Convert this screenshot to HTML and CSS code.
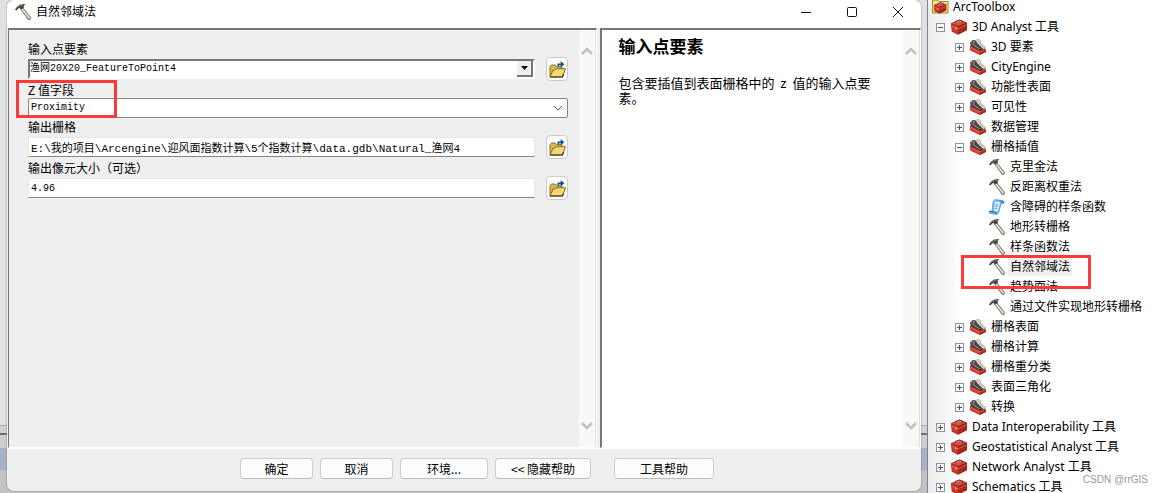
FILE: index.html
```html
<!DOCTYPE html>
<html lang="zh-CN">
<head>
<meta charset="utf-8">
<title>自然邻域法</title>
<link rel="stylesheet" href="styles.css">
</head>
<body>
<svg class="defs" aria-hidden="true">
  <symbol id="hammer" viewBox="0 0 16 16">
    <path d="M5.5 5l2.200-1.500 7.800 9.700-.3 2-1.700.8z" fill="#a99f8c" stroke="#6d675c" stroke-width=".7"/>
    <path d="M7 5l7.400 9.200" stroke="#eee6d3" stroke-width="1.300"/>
    <path d="M0 5.500L1.800 3 4.500.8 9 0l1.400.7-2 1.100.8 1.500-2.700 2.200L4.800 4.300 3 4.500 1.500 6.500z" fill="#424545"/>
    <path d="M2.600 3.200L5 1.600l3-.6" stroke="#8c9090" stroke-width=".7" fill="none"/>
  </symbol>
  <symbol id="box" viewBox="0 0 16 16">
    <path d="M0 4.200L8.500.4 16 3.400v7.800L7 15.800.8 12.500z" fill="#8a1c15"/>
    <path d="M.3 4.200L8.500.8l7.200 2.700L7 7z" fill="#cf5145"/>
    <path d="M.4 4.700L7 7.500v7.800L1.200 12.200z" fill="#cf3628"/>
    <path d="M7 7.500l8.600-3.700v7L7 15.300z" fill="#a9261d"/>
    <path d="M.6 6.800L7 9.800l8.500-3.700" stroke="#e07464" stroke-width=".7" fill="none"/>
    <path d="M4.300 3.900L5 2.500l3.500-1.300 2.800 1.300v1.500" stroke="#4a2420" stroke-width=".9" fill="none"/>
    <path d="M5.200 3.400l3.200-1.300 2 .8" stroke="#f2c5bb" stroke-width=".6" fill="none"/>
    <path d="M4.300 8.300l1 .4v2l-1-.5z" fill="#f5ddd5"/>
  </symbol>
  <symbol id="toolset" viewBox="0 0 16 16">
    <path d="M0 7l3-1.500L16 10v3l-6 3L.4 11.500z" fill="#8f1d15"/>
    <path d="M.2 7.500L10 12.500v3.200L.6 11.300z" fill="#d8402f"/>
    <path d="M10 12.500l6-2.700v3L10 15.700z" fill="#a8281c"/>
    <path d="M.4 8L10 13l6-2.700" stroke="#ee8573" stroke-width=".6" fill="none"/>
    <path d="M0 3.500L2.600 1 6 1.500l9 7-5 3.300L.6 6.500z" fill="#474747"/>
    <path d="M1 4.500L3 2.300l1.500 1-1.400 2.200 6.500 4.500" stroke="#a9aaa9" stroke-width=".8" fill="none"/>
    <path d="M5.500 1.500L8.200.3l2 1.200L10.500 4l5 4.500-2 1.800L7.500 4.500z" fill="#e4ddcb" stroke="#77736b" stroke-width=".5"/>
    <path d="M7.500 2.200l2.200 2 3.600 4" stroke="#aaa392" stroke-width=".6" fill="none"/>
  </symbol>
  <symbol id="root" viewBox="0 0 17 14">
    <path d="M.5 0h5l1.500 1.500h9V13H.5z" fill="#f0d876" stroke="#a18631"/>
    <path d="M1 3h14" stroke="#fff3ae"/>
    <g transform="translate(2 2) scale(.78 .74)"><use href="#box" width="16" height="16"/></g>
  </symbol>
  <symbol id="script" viewBox="0 0 16 16">
    <path d="M4 2.500L6 .6l8 1 1.400 2-2 1.300-1.200-.5L9.500 14 7.800 15.600.8 14.300.3 12l3 .1z" fill="#6fb6ee" stroke="#3b8fd1" stroke-width=".7"/>
    <path d="M5.800 2.500l5.500.8-2.500 9.200-4-.7z" fill="#e0f3ff"/>
    <path d="M6.500 5.200l3 .5M6 7.200l3 .5M5.300 9.200l3 .5" stroke="#2f87c9" stroke-width=".8"/>
    <path d="M.8 12.400l6 1 .7 1.600" stroke="#1b6eb3" fill="none"/>
    <path d="M11.500 2.500l2.500.3.200 1.200" stroke="#1b6eb3" fill="none"/>
  </symbol>
  <symbol id="folder" viewBox="0 0 17 17">
    <path d="M1 16V5.800L2.500 4H6l1.500 1.700H13V8" fill="#d9b64f" stroke="#8b6c24"/>
    <path d="M1 16L4.200 9H6l1.500-1.300h9L13.500 16z" fill="#f3d878" stroke="#8b6c24"/>
    <path d="M1 16h12.500l1-2.700" fill="none" stroke="#3e2e0b" stroke-width="1.200"/>
    <path d="M8.500 5V2.500h3.200V0L15.300 3.200l-3.600 3.300V4.300H10V6z" fill="#0c5198"/>
  </symbol>
  <symbol id="up" viewBox="0 0 12 10"><path d="M1 8l5-5 5 5" fill="none" stroke="#c1c1c1" stroke-width="2.600"/></symbol>
  <symbol id="down" viewBox="0 0 12 10"><path d="M1 2l5 5 5-5" fill="none" stroke="#c1c1c1" stroke-width="2.600"/></symbol>
</svg>

<div class="backdrop">
  <main class="dialog">
    <header class="titlebar">
      <svg class="icon"><use href="#hammer"/></svg>
      <h1>自然邻域法</h1>
      <div class="window-buttons">
        <button aria-label="最小化"><svg viewBox="0 0 12 12"><path d="M1 6.500h10"/></svg></button>
        <button aria-label="最大化"><svg viewBox="0 0 12 12"><rect x="1.500" y="1.500" width="9" height="9" rx="1"/></svg></button>
        <button aria-label="关闭"><svg viewBox="0 0 12 12"><path d="M1 1l10 10M11 1L1 11"/></svg></button>
      </div>
    </header>

    <div class="panes">
      <section class="pane form-pane">
        <form class="form">
          <div class="field">
            <label for="points">输入点要素</label>
            <div class="control">
              <span class="select-wrap classic">
                <select id="points" class="value"><option>渔网20X20_FeatureToPoint4</option></select>
                <span class="drop"><svg viewBox="0 0 7 4"><path d="M0 0h7L3.500 4z"/></svg></span>
              </span>
              <button type="button" class="browse" aria-label="浏览输入点要素"><svg><use href="#folder"/></svg></button>
            </div>
          </div>
          <div class="field marked">
            <label for="zfield"><span class="latin">Z</span> 值字段</label>
            <div class="control">
              <span class="select-wrap modern">
                <select id="zfield" class="value"><option>Proximity</option></select>
                <svg class="chevron" viewBox="0 0 10 6"><path d="M1 1l4 4 4-4"/></svg>
              </span>
            </div>
          </div>
          <div class="field">
            <label for="output">输出栅格</label>
            <div class="control">
              <input id="output" class="value path" type="text" value="E:\我的项目\Arcengine\迎风面指数计算\5个指数计算\data.gdb\Natural_渔网4">
              <button type="button" class="browse" aria-label="浏览输出栅格"><svg><use href="#folder"/></svg></button>
            </div>
          </div>
          <div class="field">
            <label for="cell">输出像元大小（可选）</label>
            <div class="control">
              <input id="cell" class="value" type="text" value="4.96">
              <button type="button" class="browse" aria-label="浏览像元大小"><svg><use href="#folder"/></svg></button>
            </div>
          </div>
        </form>
        <div class="scrollbar"><svg><use href="#up"/></svg><svg><use href="#down"/></svg></div>
      </section>

      <section class="pane help-pane">
        <article class="help">
          <h2>输入点要素</h2>
          <p>包含要插值到表面栅格中的 <span class="z">z</span> 值的输入点要素。</p>
        </article>
        <div class="scrollbar"><svg><use href="#up"/></svg><svg><use href="#down"/></svg></div>
      </section>
    </div>

    <footer class="actions">
      <button class="small">确定</button>
      <button class="small">取消</button>
      <button class="medium">环境...</button>
      <button class="large">&lt;&lt; 隐藏帮助</button>
      <button class="help-button">工具帮助</button>
    </footer>
  </main>
</div>

<nav class="toolbox">
  <div class="row root"><svg class="root-icon"><use href="#root"/></svg><span>ArcToolbox</span></div>
  <ul>
    <li><div class="row"><button class="toggle open" aria-label="折叠"></button><svg class="icon"><use href="#box"/></svg><span>3D Analyst 工具</span></div>
      <ul>
        <li class="row"><button class="toggle" aria-label="展开"></button><svg class="icon"><use href="#toolset"/></svg><span>3D 要素</span></li>
        <li class="row"><button class="toggle" aria-label="展开"></button><svg class="icon"><use href="#toolset"/></svg><span>CityEngine</span></li>
        <li class="row"><button class="toggle" aria-label="展开"></button><svg class="icon"><use href="#toolset"/></svg><span>功能性表面</span></li>
        <li class="row"><button class="toggle" aria-label="展开"></button><svg class="icon"><use href="#toolset"/></svg><span>可见性</span></li>
        <li class="row"><button class="toggle" aria-label="展开"></button><svg class="icon"><use href="#toolset"/></svg><span>数据管理</span></li>
        <li><div class="row"><button class="toggle open" aria-label="折叠"></button><svg class="icon"><use href="#toolset"/></svg><span>栅格插值</span></div>
          <ul class="tools">
            <li class="row"><svg class="icon"><use href="#hammer"/></svg><span>克里金法</span></li>
            <li class="row"><svg class="icon"><use href="#hammer"/></svg><span>反距离权重法</span></li>
            <li class="row"><svg class="icon"><use href="#script"/></svg><span>含障碍的样条函数</span></li>
            <li class="row"><svg class="icon"><use href="#hammer"/></svg><span>地形转栅格</span></li>
            <li class="row"><svg class="icon"><use href="#hammer"/></svg><span>样条函数法</span></li>
            <li class="row current"><svg class="icon"><use href="#hammer"/></svg><span>自然邻域法</span></li>
            <li class="row"><svg class="icon"><use href="#hammer"/></svg><span>趋势面法</span></li>
            <li class="row"><svg class="icon"><use href="#hammer"/></svg><span>通过文件实现地形转栅格</span></li>
          </ul>
        </li>
        <li class="row"><button class="toggle" aria-label="展开"></button><svg class="icon"><use href="#toolset"/></svg><span>栅格表面</span></li>
        <li class="row"><button class="toggle" aria-label="展开"></button><svg class="icon"><use href="#toolset"/></svg><span>栅格计算</span></li>
        <li class="row"><button class="toggle" aria-label="展开"></button><svg class="icon"><use href="#toolset"/></svg><span>栅格重分类</span></li>
        <li class="row"><button class="toggle" aria-label="展开"></button><svg class="icon"><use href="#toolset"/></svg><span>表面三角化</span></li>
        <li class="row"><button class="toggle" aria-label="展开"></button><svg class="icon"><use href="#toolset"/></svg><span>转换</span></li>
      </ul>
    </li>
    <li class="row"><button class="toggle" aria-label="展开"></button><svg class="icon"><use href="#box"/></svg><span>Data Interoperability 工具</span></li>
    <li class="row"><button class="toggle" aria-label="展开"></button><svg class="icon"><use href="#box"/></svg><span>Geostatistical Analyst 工具</span></li>
    <li class="row"><button class="toggle" aria-label="展开"></button><svg class="icon"><use href="#box"/></svg><span>Network Analyst 工具</span></li>
    <li class="row"><button class="toggle" aria-label="展开"></button><svg class="icon"><use href="#box"/></svg><span>Schematics 工具</span></li>
  </ul>
  <small class="watermark">CSDN @rrGIS</small>
</nav>
</body>
</html>
```
FILE: styles.css
```css
*, *::after { box-sizing: border-box; }

body {
  margin: 0;
  height: 100vh;
  display: flex;
  overflow: hidden;
  background: #fff;
  color: #000;
  font: 12px/16px "Noto Sans", "Noto Sans CJK SC", sans-serif;
}

h1, h2, p, ul { margin: 0; padding: 0; font-weight: normal; }
ul { list-style: none; }
button, input, select { font: inherit; color: inherit; margin: 0; padding: 0; }
svg { display: block; flex: none; }
.defs { position: absolute; width: 0; height: 0; }
.icon { width: 16px; height: 16px; }

.backdrop {
  flex: 1;
  min-width: 0;
  display: flex;
  padding: 0 6px 2px 7px;
  background: linear-gradient(#e0e2e2 425px, #aaa 425px 426px, #d2d2d2 426px 433px, #6f6f6f 433px 435px, #cfcfcf 435px 448px, #a5b3c3 448px 470px, #c2c2c2 470px);
}

.dialog {
  flex: 1;
  min-width: 0;
  display: flex;
  flex-direction: column;
  background: #efefef;
  border-radius: 7px;
  overflow: hidden;
  box-shadow: 0 0 2px #777;
}

.titlebar {
  height: 28px;
  flex: none;
  display: flex;
  align-items: center;
  gap: 5px;
  padding: 0 0 4px 8px;
  background: #fff;
}
.titlebar h1 { font-size: 12px; }
.window-buttons { margin-left: auto; display: flex; }
.window-buttons button {
  width: 46px;
  height: 24px;
  display: grid;
  place-items: center;
  border: 0;
  background: none;
}
.window-buttons svg { width: 12px; height: 12px; fill: none; stroke: #111; }

.panes { flex: 1; min-height: 0; display: flex; gap: 3px; padding-left: 1px; }
.pane {
  display: flex;
  min-width: 0;
  border: 2px solid #777;
  border-right: 1px solid #fff;
  border-bottom: 1px solid #fff;
}
.form-pane { flex: 590; border-left-width: 1px; }
.help-pane { flex: 319; background: #fff; }

.scrollbar {
  width: 17px;
  flex: none;
  display: flex;
  flex-direction: column;
  justify-content: space-between;
  align-items: center;
  padding: 16px 0;
  background: #f8f8f8;
  border-right: 1px solid #e0e0e0;
}
.scrollbar svg { width: 12px; height: 10px; }

.form {
  flex: 1;
  min-width: 0;
  display: flex;
  flex-direction: column;
  gap: 1px;
  padding: 11px 11px 0 19px;
  font-family: "Noto Sans CJK SC", sans-serif;
}
.field { position: relative; }
.field label { display: block; height: 16px; line-height: 16px; }
.latin { font-family: "Liberation Mono", monospace; line-height: 12px; }
.control { display: flex; align-items: center; gap: 11px; }

.marked::after {
  content: "";
  position: absolute;
  left: -12px;
  top: -2px;
  width: 101px;
  height: 38px;
  border: 3px solid #fd3939;
  pointer-events: none;
}

.value {
  width: 100%;
  min-width: 0;
  padding: 0 2px;
  border: 0;
  background: #fff;
  appearance: none;
  font: 10px/16px "Liberation Mono", "Noto Sans CJK SC", monospace;
}
.value.path { font-size: 11px; }
input.value {
  flex: 1;
  height: 20px;
  border: 1px solid #e7e7e7;
  border-bottom-color: #858585;
}

.select-wrap { flex: 1; display: flex; align-items: center; background: #fff; }
.classic { height: 20px; border: 2px solid #777; border-right-color: #fff; border-bottom-color: #fff; }
.classic .value { height: 16px; padding: 0; }
.drop {
  flex: none;
  display: grid;
  place-items: center;
  width: 16px;
  height: 16px;
  background: #efefef;
  border-right: 2px solid #777;
  border-bottom: 2px solid #777;
}
.drop svg { width: 7px; height: 4px; }
.modern { height: 20px; border: 1px solid #858585; border-radius: 2px; padding-right: 4px; }
.modern .value { height: 16px; }
.chevron { width: 10px; height: 6px; fill: none; stroke: #555; }

.browse {
  flex: none;
  display: grid;
  place-items: center;
  width: 22px;
  height: 24px;
  border: 1px solid #ccc;
  border-radius: 4px;
  background: #fdfdfd;
}
.browse svg { width: 17px; height: 17px; }

.help { flex: 1; padding: 6px 28px 0 16px; font-family: "Noto Sans CJK SC", sans-serif; }
.help h2 { font-size: 17px; line-height: 20px; font-weight: bold; }
.help p { margin-top: 19px; font-size: 13px; line-height: 15px; }
.z { margin: 0 3px; line-height: 13px; }

.actions {
  flex: none;
  display: flex;
  gap: 7px;
  padding: 9px 20px 12px 233px;
  border-top: 1px solid #fff;
  font-family: "Noto Sans CJK SC", sans-serif;
}
.actions button {
  height: 21px;
  border: 1px solid #ccc;
  border-bottom-color: #bbb;
  border-radius: 4px;
  background: #fdfdfd;
  line-height: 16px;
}
.small { width: 73px; }
.medium { width: 88px; }
.large { width: 96px; }
.help-button { width: 100px; margin-left: 16px; }

.toolbox {
  position: relative;
  width: 235px;
  flex: none;
  overflow: hidden;
  white-space: nowrap;
  border-left: 1px solid #7b8290;
  background: linear-gradient(90deg, #ededed, #fff 36px);
}
.toolbox ul ul { padding-left: 19px; }
.row { height: 20px; display: flex; align-items: center; padding-left: 8px; gap: 5px; line-height: 14px; }
.row.root { height: 17px; padding: 0 0 3px 4px; gap: 4px; }
.root-icon { width: 17px; height: 14px; }
.toggle {
  width: 9px;
  height: 9px;
  flex: none;
  margin-right: 1px;
  border: 1px solid #929292;
  background:
    linear-gradient(#36539e, #36539e) center / 5px 1px no-repeat,
    linear-gradient(#36539e, #36539e) center / 1px 5px no-repeat,
    #fafafa;
}
.toggle.open { background: linear-gradient(#36539e, #36539e) center / 5px 1px no-repeat, #fafafa; }
.tools .row { padding-left: 23px; }
.current { position: relative; }
.current span { background: #efefef; box-shadow: 0 0 0 2px #efefef; }
.current::after {
  content: "";
  position: absolute;
  left: -5px;
  top: -2px;
  width: 130px;
  height: 34px;
  border: 3px solid #fd3939;
  pointer-events: none;
}
.watermark {
  position: absolute;
  right: 14px;
  bottom: 5px;
  font: 10px/16px "Liberation Sans", sans-serif;
  color: #999;
}
```
